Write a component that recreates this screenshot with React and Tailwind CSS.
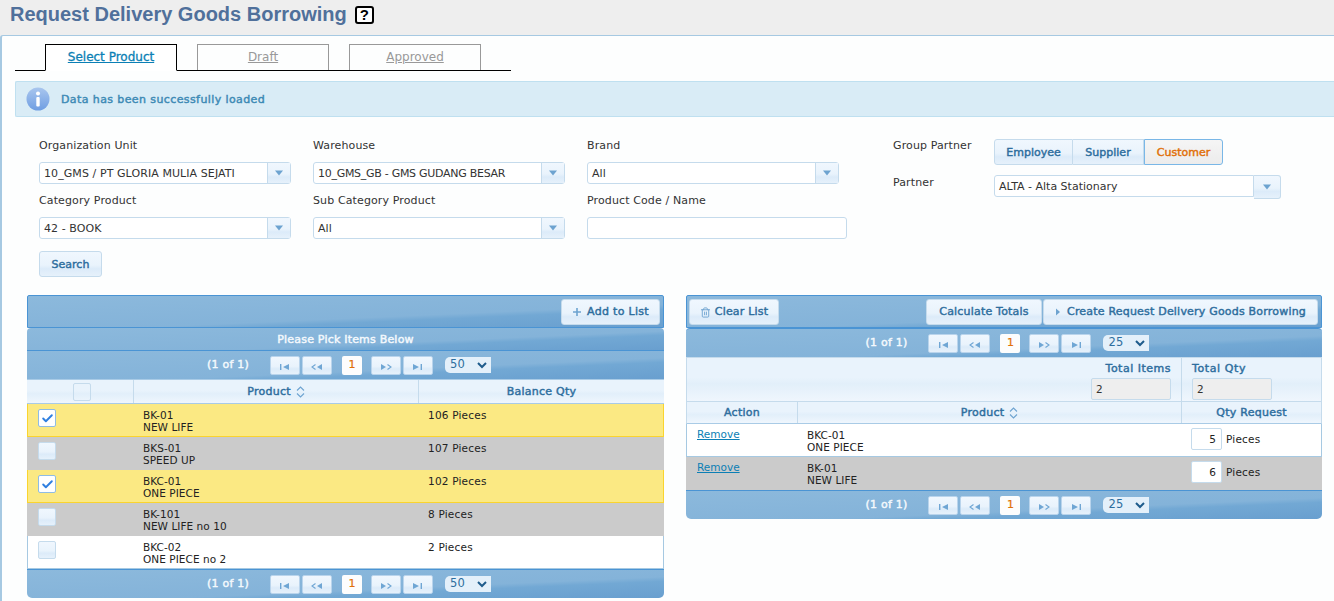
import React from 'react'
import { Check, Trash2 } from 'lucide-react'

const barBg = 'bg-[linear-gradient(177.5deg,#8cb9dc_0%,#84b3d9_62%,#72a8d4_70%,#699fcf_100%)]'
const headBg = 'bg-[linear-gradient(to_bottom,#e9f3fc_0%,#e9f3fc_45%,#e2effa_60%,#eff6fd_100%)]'
const btnBg = 'bg-[linear-gradient(to_bottom,#f0f7fe_0%,#e9f3fc_55%,#dcebf9_70%,#e6f1fb_100%)]'
const uiFont = "font-['DejaVu_Sans',sans-serif]"
const strong = 'text-[11px] [-webkit-text-stroke:0.45px]'

function Caret() {
  return (
    <svg width="10" height="6" viewBox="0 0 10 6"><path d="M1 0.5h8L5 5.5z" fill="#6da3d0" /></svg>
  )
}

function Label({ children }) {
  return <div className={`h-[17px] mb-2 text-[11px] leading-[18px] text-[#333] tracking-[0.12px] ${uiFont}`}>{children}</div>
}

function SelectBox({ value, compact }) {
  return (
    <div className="flex h-[22px] w-[252px] rounded-[3px] border border-[#c5dbec] bg-white">
      <div className={`flex-1 px-1 text-[11px] leading-[21px] text-[#333] whitespace-nowrap overflow-hidden ${compact ? 'tracking-[-0.28px]' : 'tracking-[0.08px]'} ${uiFont}`}>{value}</div>
      <div className={`flex w-[23px] items-center justify-center border-l border-[#c5dbec] ${btnBg}`}><Caret /></div>
    </div>
  )
}

function Field({ label, value, compact }) {
  return (
    <div className="mb-2">
      <Label>{label}</Label>
      <SelectBox value={value} compact={compact} />
    </div>
  )
}

function Button({ children, className = 'pt-px tracking-[0.2px]' }) {
  return (
    <button className={`flex h-[26px] items-center justify-center rounded-[3px] border border-[#c5dbec] text-[#2e6e9e] whitespace-nowrap ${strong} ${btnBg} ${uiFont} ${className}`}>
      {children}
    </button>
  )
}

function PageIcon({ type }) {
  if (type === 'first') return <svg width="11" height="8" viewBox="0 0 11 8"><path d="M1 1h1.4v6H1zM10 1v6L4 4z" fill="#6fa6d4" /></svg>
  if (type === 'last') return <svg width="11" height="8" viewBox="0 0 11 8"><path d="M10 1H8.6v6H10zM1 1v6l6-3z" fill="#6fa6d4" /></svg>
  if (type === 'prev') {
    return (
      <svg width="12" height="8" viewBox="0 0 12 8">
        <path d="M11 1v6L6 4z" fill="#6fa6d4" />
        <path d="M4.5 1.5L1 4l3.5 2.5" fill="none" stroke="#6fa6d4" strokeWidth="1.1" />
      </svg>
    )
  }
  return (
    <svg width="12" height="8" viewBox="0 0 12 8">
      <path d="M1 1v6l5-3z" fill="#6fa6d4" />
      <path d="M7.5 1.5L11 4 7.5 6.5" fill="none" stroke="#6fa6d4" strokeWidth="1.1" />
    </svg>
  )
}

function PageBtn({ type, className = '' }) {
  return (
    <span className={`flex h-[19px] w-[30px] items-center justify-center rounded-[2px] border border-[#b9d4ec] pt-[3px] ${btnBg} ${className}`}>
      <PageIcon type={type} />
    </span>
  )
}

function Paginator({ size, className = '' }) {
  return (
    <div className={`flex h-[29px] items-center justify-center border-t border-[#4a94d4] pl-[7px] ${barBg} ${uiFont} ${className}`}>
      <span className={`mr-[21px] text-[#f4f9fd] tracking-[0.2px] ${strong}`}>(1 of 1)</span>
      <PageBtn type="first" className="mr-[2px]" />
      <PageBtn type="prev" />
      <span className="ml-[10px] mr-[9px] flex h-[19px] w-[20px] items-center justify-center rounded-[2px] bg-[#fdfdfd] text-[11px] text-[#e17009] [-webkit-text-stroke:0.2px]">1</span>
      <PageBtn type="next" className="mr-[2px]" />
      <PageBtn type="last" />
      <span className="ml-3 flex h-[16px] w-[46px] items-center justify-between rounded-l-[5px] bg-[#e4f0fa] pl-[5px] pr-[3px] text-[11.5px] text-[#2e6e9e] tracking-[0.4px]">
        {size}
        <svg width="12" height="8" viewBox="0 0 12 8"><path d="M2 2l4 4 4-4" fill="none" stroke="#1f5c8c" strokeWidth="2" /></svg>
      </span>
    </div>
  )
}

function SortIcon() {
  return (
    <svg width="9" height="12" viewBox="0 0 9 12" className="ml-[5px]"><path d="M1 4.5L4.5 1 8 4.5M1 7.5L4.5 11 8 7.5" fill="none" stroke="#6da3d0" strokeWidth="1.1" /></svg>
  )
}

function HeadCell({ children, className = '' }) {
  return (
    <div className={`flex items-center justify-center pt-px text-[#2e6e9e] tracking-[0.25px] ${strong} ${uiFont} ${className}`}>{children}</div>
  )
}

function Box({ checked, plain }) {
  return (
    <span className={`flex h-[18px] w-[18px] items-center justify-center rounded-[2px] border ${checked ? 'border-[#8fbce4] bg-white' : plain ? 'border-[#c5dbec]' : `border-[#c5dbec] ${btnBg}`}`}>
      {checked && <Check size={13} strokeWidth={3.5} className="text-[#2f7fe0]" />}
    </span>
  )
}

const rowBg = {
  yellow: 'bg-[#fbe983] border-[#fad42e]',
  gray: 'bg-[#cbcbcb] border-[#cbcbcb]',
  white: 'bg-white border-[#a6c9e2]',
}

const pickRows = [
  { code: 'BK-01', name: 'NEW LIFE', qty: '106 Pieces', tone: 'yellow', checked: true },
  { code: 'BKS-01', name: 'SPEED UP', qty: '107 Pieces', tone: 'gray' },
  { code: 'BKC-01', name: 'ONE PIECE', qty: '102 Pieces', tone: 'yellow', checked: true },
  { code: 'BK-101', name: 'NEW LIFE no 10', qty: '8 Pieces', tone: 'gray' },
  { code: 'BKC-02', name: 'ONE PIECE no 2', qty: '2 Pieces', tone: 'white' },
]

const listRows = [
  { code: 'BKC-01', name: 'ONE PIECE', qty: '5', tone: 'white' },
  { code: 'BK-01', name: 'NEW LIFE', qty: '6', tone: 'gray' },
]

function ProductCell({ code, name, className = '' }) {
  return (
    <div className={`pt-[5px] text-[10.5px] leading-[12px] text-[#222] tracking-[0.05px] ${className}`}>
      <div>{code}</div>
      <div>{name}</div>
    </div>
  )
}

function PickTable() {
  return (
    <div className={`w-[637px] ${uiFont}`}>
      <div className={`flex h-[33px] items-center justify-end rounded-t-[2px] border border-[#4a94d4] pr-[3px] ${barBg}`}>
        <Button className="w-[99px] pt-px tracking-[0.3px]">
          <svg width="10" height="10" viewBox="0 0 10 10" className="mr-[5px]"><path d="M5 1v8M1 5h8" stroke="#6da3d0" strokeWidth="1.6" /></svg>
          Add to List
        </Button>
      </div>
      <div className={`flex h-[22px] items-center justify-center rounded-t-[4px] pt-[2px] text-[#f4f9fd] tracking-[0.2px] ${strong} ${barBg}`}>Please Pick Items Below</div>
      <Paginator size="50" />
      <div className={`flex h-[25px] border-y border-[#a9cbe6] ${headBg}`}>
        <HeadCell className="w-[107px] border-r border-[#c5dbec] pl-[4px]"><Box plain /></HeadCell>
        <HeadCell className="w-[285px] border-r border-[#c5dbec]">Product <SortIcon /></HeadCell>
        <HeadCell className="flex-1">Balance Qty</HeadCell>
      </div>
      {pickRows.map((row) => (
        <div key={row.code} className={`flex h-[33px] border-x border-b ${rowBg[row.tone]}`}>
          <div className="w-[106px] pl-[10px] pt-[5px]"><Box checked={row.checked} /></div>
          <ProductCell code={row.code} name={row.name} className="w-[285px] pl-[9px]" />
          <div className="flex-1 pl-[9px] pt-[5px] text-[10.5px] leading-[12px] text-[#222] tracking-[0.2px]">{row.qty}</div>
        </div>
      ))}
      <Paginator size="50" className="rounded-b-[5px]" />
    </div>
  )
}

function ListTable() {
  return (
    <div className={`w-[636px] ${uiFont}`}>
      <div className={`flex h-[33px] items-center rounded-t-[2px] border border-[#4a94d4] px-[2px] ${barBg}`}>
        <Button className="w-[90px] pt-px tracking-[0.2px]">
          <Trash2 size={11} className="mr-[4px] text-[#6da3d0]" />
          Clear List
        </Button>
        <Button className="ml-auto w-[116px] pt-px tracking-[0.2px]">Calculate Totals</Button>
        <Button className="ml-px mr-[1px] w-[275px] pt-px tracking-[0.2px]">
          <svg width="6" height="8" viewBox="0 0 6 8" className="mr-[6px]"><path d="M1 0.5v7L5 4z" fill="#6da3d0" /></svg>
          Create Request Delivery Goods Borrowing
        </Button>
      </div>
      <Paginator size="25" className="rounded-t-[4px]" />
      <div className={`flex h-[44px] border-x border-t border-[#c5dbec] ${headBg}`}>
        <div className="flex flex-1 flex-col items-end pr-[10px] pt-[3px]">
          <span className={`leading-[15px] text-[#2e6e9e] tracking-[0.5px] ${strong}`}>Total Items</span>
          <span className="mt-[2px] h-[22px] w-[80px] rounded-[2px] border border-[#c5dbec] bg-[#eeeeee] px-1 text-[10.5px] leading-[20px] text-[#333]">2</span>
        </div>
        <div className="w-[140px] border-l border-[#c5dbec] pl-[10px] pt-[3px]">
          <div className={`leading-[15px] text-[#2e6e9e] tracking-[0.6px] ${strong}`}>Total Qty</div>
          <div className="mt-[2px] h-[22px] w-[80px] rounded-[2px] border border-[#c5dbec] bg-[#eeeeee] px-1 text-[10.5px] leading-[20px] text-[#333]">2</div>
        </div>
      </div>
      <div className={`flex h-[23px] border border-[#c5dbec] border-b-[#a9cbe6] ${headBg}`}>
        <HeadCell className="w-[111px] border-r border-[#c5dbec]">Action</HeadCell>
        <HeadCell className="flex-1 border-r border-[#c5dbec]">Product <SortIcon /></HeadCell>
        <HeadCell className="w-[139px]">Qty Request</HeadCell>
      </div>
      {listRows.map((row) => (
        <div key={row.code} className={`flex h-[33px] border-x border-b ${rowBg[row.tone]} border-[#a6c9e2]`}>
          <div className="w-[111px] pl-[10px] pt-[4px] text-[10.5px] leading-[12px]">
            <a className="text-[#0b7fb5] underline">Remove</a>
          </div>
          <ProductCell code={row.code} name={row.name} className="flex-1 pl-[9px]" />
          <div className="flex w-[140px] items-center pb-[2px] pl-[10px] text-[10.5px] text-[#222]">
            <span className="h-[22px] w-[31px] rounded-[2px] border border-[#c5dbec] bg-white pr-[5px] text-right leading-[20px]">{row.qty}</span>
            <span className="ml-[4px] pt-px tracking-[0.2px]">Pieces</span>
          </div>
        </div>
      ))}
      <Paginator size="25" className="rounded-b-[5px]" />
    </div>
  )
}

export default function App() {
  return (
    <div className="min-h-[601px] overflow-hidden bg-[#eeeeee]">
      <div className="flex h-[35px] items-start pl-[10px]">
        <h1 className="font-['Liberation_Sans',sans-serif] text-[20px] font-bold leading-[28px] text-[#50709b]">Request Delivery Goods Borrowing</h1>
        <span className="ml-2 mt-[6px] flex h-[18px] w-[19px] items-center justify-center rounded-[3px] border-2 border-black bg-white font-['Liberation_Sans',sans-serif] text-[15px] font-bold text-black">?</span>
      </div>

      <div className="h-[566px] overflow-hidden rounded-tl-[3px] border-l-2 border-t border-[#a6c9e2] bg-[#fdfefe] pt-2">
        <div className="ml-[13px] flex h-[27px] w-[496px] border-b border-black pl-[30px]">
          <a className={`h-[27px] w-[132px] border border-b-white border-black bg-white text-center text-[12px] leading-[24px] text-[#0b7fb5] underline [-webkit-text-stroke:0.3px] ${uiFont}`}>Select Product</a>
          <a className={`ml-5 h-[26px] w-[132px] border border-b-0 border-[#999] text-center text-[12px] leading-[25px] text-[#999] underline ${uiFont}`}>Draft</a>
          <a className={`ml-5 h-[26px] w-[132px] border border-b-0 border-[#999] text-center text-[12px] leading-[25px] text-[#999] underline ${uiFont}`}>Approved</a>
        </div>

        <div className="ml-[13px] mt-[10px] flex h-[36px] items-center rounded-l-[2px] border border-r-0 border-[#bfe0f0] bg-[#d9ecf6] pl-[10px]">
          <svg width="24" height="24" viewBox="0 0 24 24">
            <defs>
              <linearGradient id="infoFill" x1="0" y1="0" x2="0" y2="1">
                <stop offset="0" stopColor="#a9c6ee" />
                <stop offset="1" stopColor="#6f9ee2" />
              </linearGradient>
            </defs>
            <circle cx="12" cy="12" r="11.5" fill="url(#infoFill)" />
            <circle cx="12" cy="6.5" r="2" fill="#fff" />
            <rect x="10.3" y="10" width="3.4" height="9.5" rx="1" fill="#fff" />
          </svg>
          <span className={`ml-[11px] pt-[2px] text-[#3d8ab5] tracking-[0.4px] ${strong} ${uiFont}`}>Data has been successfully loaded</span>
        </div>

        <div className="flex pl-[37px] pt-[20px]">
          <div className="w-[854px]">
            <div className="grid grid-cols-[274px_274px_274px]">
              <Field label="Organization Unit" value="10_GMS / PT GLORIA MULIA SEJATI" />
              <Field label="Warehouse" value="10_GMS_GB - GMS GUDANG BESAR" compact />
              <Field label="Brand" value="All" />
              <Field label="Category Product" value="42 - BOOK" />
              <Field label="Sub Category Product" value="All" />
              <div>
                <Label>Product Code / Name</Label>
                <div className="h-[22px] w-[260px] rounded-[3px] border border-[#c5dbec] bg-white" />
              </div>
            </div>
            <Button className="mt-[4px] w-[63px] pt-[2px]">Search</Button>
          </div>

          <div className={uiFont}>
            <div className="flex h-[38px]">
              <div className="w-[101px] text-[11px] leading-[17px] text-[#333] tracking-[0.12px]">Group Partner</div>
              <div className="mt-[2px] flex h-[26px]">
                <Button className="w-[79px] rounded-r-none pt-[2px]">Employee</Button>
                <Button className="w-[71px] rounded-none border-l-0 pt-[2px]">Supplier</Button>
                <button className={`h-[26px] w-[79px] rounded-r-[3px] border border-[#79b7e7] bg-[linear-gradient(to_bottom,#f5f5f5,#ececec)] pt-[2px] text-[#e17009] ${strong}`}>Customer</button>
              </div>
            </div>
            <div className="flex">
              <div className="-mt-px w-[101px] text-[11px] leading-[17px] text-[#333] tracking-[0.12px]">Partner</div>
              <div className="flex h-[22px] w-[260px] rounded-l-[3px] border border-[#c5dbec] bg-white px-1 text-[11px] leading-[21px] text-[#333]">ALTA - Alta Stationary</div>
              <div className={`flex h-[24px] w-[27px] items-center justify-center rounded-r-[3px] border border-l-0 border-[#c5dbec] ${btnBg}`}><Caret /></div>
            </div>
          </div>
        </div>

        <div className="mt-[18px] flex gap-[22px] pl-[25px]">
          <PickTable />
          <ListTable />
        </div>
      </div>
    </div>
  )
}
